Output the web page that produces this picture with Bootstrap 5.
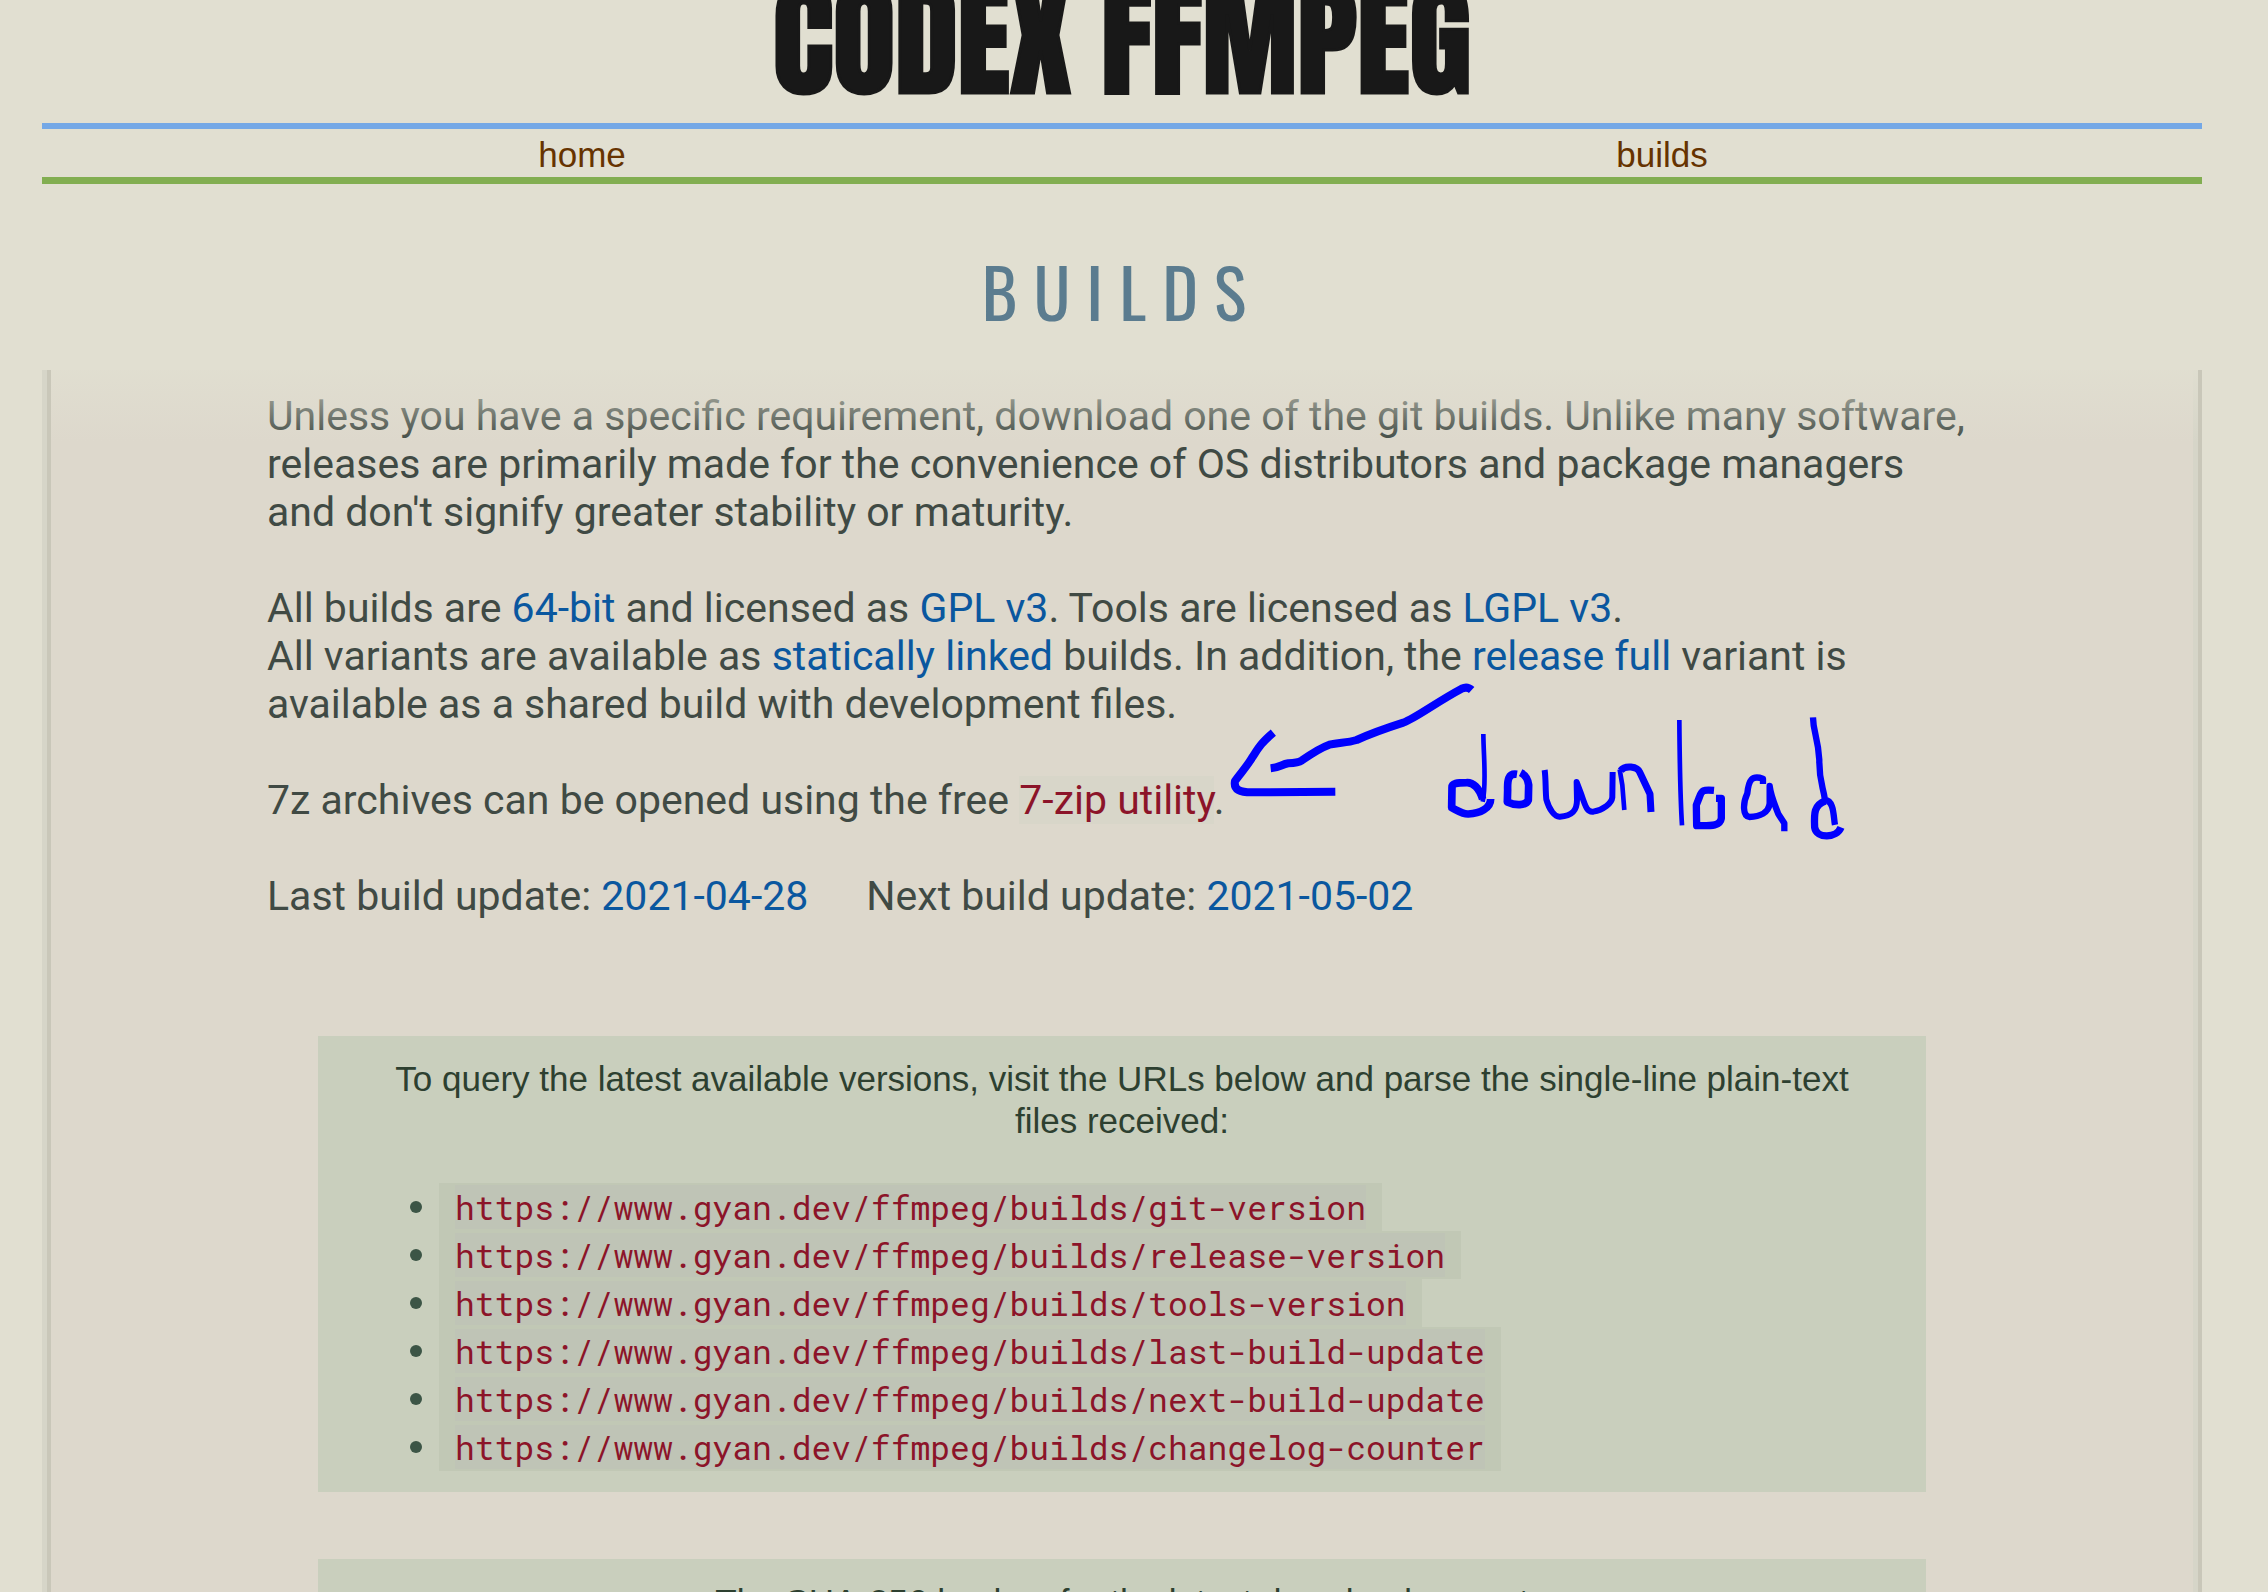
<!DOCTYPE html>
<html lang="en">
<head>
<meta charset="utf-8">
<meta name="viewport" content="width=device-width, initial-scale=1">
<title>Builds - CODEX FFMPEG</title>
<link href="https://cdn.jsdelivr.net/npm/bootstrap@5.3.0/dist/css/bootstrap.min.css" rel="stylesheet">
<style>
  body { background: #e1dfd1; color: #404a44; font-family: Roboto, "Liberation Sans", sans-serif; }
  .page-frame { padding-left: 42px; padding-right: 66px; }
  .site-title { font: 400 127px/80px Impact, Anton, "Roboto Condensed", sans-serif; color: #181818; -webkit-text-stroke: 3px #181818; padding-bottom: 43px; }
  .site-nav { border-top: 6px solid #74a8e6; border-bottom: 7px solid #82ae51; font: 35px/44px "Liberation Sans", Arial, sans-serif; }
  .site-nav a { color: #663300; padding-top: 4px; }
  .page-title { font: 400 68px/100px Oswald, "Roboto Condensed", sans-serif; letter-spacing: 16px; color: #5b7c8f; margin: 57px 0 29px; }
  .sheet { background: #ddd8cc; border-left: 5px solid #d6d5c8; border-right: 4px solid #c9c7b9; box-shadow: inset 4px 0 #c9c7b9, inset -5px 0 #d6d5c8; padding-top: 22px; }
  .sheet::before { content: ""; position: absolute; inset: 0 0 auto 4px; height: 72px; background: linear-gradient(rgba(225,223,209,.85), rgba(225,223,209,0)); z-index: 2; }
  .intro { font-size: 41px; line-height: 48px; padding: 0 221px 0 220px; margin-bottom: 116px; }
  .intro p { margin-bottom: 48px; }
  .intro a { color: #0a579f; }
  .intro .zip-link, .url-list a { color: #8c1429; }
  .intro .zip-link { background: #d8d6c9; }
  .dates { gap: 58px; }
  .info-box { background: #c9cfbd; color: #2d4030; font: 35px/42px "Liberation Sans", Arial, sans-serif; margin: 0 272px 67px 271px; padding: 22px 60px 21px; }
  .url-list { font: 33px/48px "Roboto Mono", "DejaVu Sans Mono", monospace; margin: 41px 0 0 32px; }
  .url-list li::before { content: ""; width: 12px; height: 12px; border-radius: 50%; background: #3c5546; margin-right: 17px; }
  .url-list code { font: inherit; background: #c1c8b5; padding: 0 16px; }
  .url-list a { display: block; line-height: 44px; margin: 2px 0; background: #bfc4b6; }
  .pen-note { left: 1178px; top: 305px; z-index: 3; fill: none; stroke: #0000fe; stroke-linejoin: round; }
</style>
</head>
<body class="vh-100 overflow-hidden">
<div class="page-frame">
  <header>
    <h1 class="site-title text-center mb-0">CODEX FFMPEG</h1>
    <nav class="site-nav row g-0 text-center">
      <a class="col text-decoration-none" href="#home">home</a>
      <a class="col text-decoration-none" href="#builds">builds</a>
    </nav>
  </header>
  <main>
    <h2 class="page-title text-center">BUILDS</h2>
    <div class="sheet position-relative">
      <div class="intro">
        <p>Unless you have a specific requirement, download one of the git builds. Unlike many software, releases are primarily made for the convenience of OS distributors and package managers and don't signify greater stability or maturity.</p>
        <p>All builds are <a class="text-decoration-none" href="#64">64-bit</a> and licensed as <a class="text-decoration-none" href="#gpl">GPL v3</a>. Tools are licensed as <a class="text-decoration-none" href="#lgpl">LGPL v3</a>.<br>
        All variants are available as <a class="text-decoration-none" href="#static">statically linked</a> builds. In addition, the <a class="text-decoration-none" href="#full">release full</a> variant is available as a shared build with development files.</p>
        <p>7z archives can be opened using the free <a class="zip-link text-decoration-none" href="#7zip">7-zip utility</a>.</p>
        <div class="dates d-flex">
          <span>Last build update: <a class="text-decoration-none" href="#last">2021-04-28</a></span>
          <span>Next build update: <a class="text-decoration-none" href="#next">2021-05-02</a></span>
        </div>
      </div>
      <section class="info-box">
        <div class="text-center">To query the latest available versions, visit the URLs below and parse the single-line plain-text files received:</div>
        <ul class="url-list list-unstyled">
          <li class="d-flex align-items-center"><code><a class="text-decoration-none" href="#git-version">https://www.gyan.dev/ffmpeg/builds/git-version</a></code></li>
          <li class="d-flex align-items-center"><code><a class="text-decoration-none" href="#release-version">https://www.gyan.dev/ffmpeg/builds/release-version</a></code></li>
          <li class="d-flex align-items-center"><code><a class="text-decoration-none" href="#tools-version">https://www.gyan.dev/ffmpeg/builds/tools-version</a></code></li>
          <li class="d-flex align-items-center"><code><a class="text-decoration-none" href="#last-build-update">https://www.gyan.dev/ffmpeg/builds/last-build-update</a></code></li>
          <li class="d-flex align-items-center"><code><a class="text-decoration-none" href="#next-build-update">https://www.gyan.dev/ffmpeg/builds/next-build-update</a></code></li>
          <li class="d-flex align-items-center"><code><a class="text-decoration-none" href="#changelog-counter">https://www.gyan.dev/ffmpeg/builds/changelog-counter</a></code></li>
        </ul>
      </section>
      <section class="info-box text-center">The SHA-256 hashes for the latest downloads are at</section>
      <!-- freehand pen marks: an arrow to the 7-zip link and a scribbled word -->
      <svg class="pen-note position-absolute" width="640" height="180" viewBox="1225 675 640 180" role="img" aria-label="download">
        <g transform="translate(1220 670) scale(.3333)" stroke-width="24">
          <path d="M152,295 C180,292 185,283 205,280 C225,279 235,278 246,271 C280,247 300,234 328,224 C360,217 380,219 410,210 C450,192 500,174 550,158 C590,142 650,96 725,56 Q742,48 755,60"/>
          <path d="M160,188 C120,222 115,235 95,265 C80,290 60,312 45,333 C40,360 60,367 95,367 L346,365"/>
        </g>
        <g transform="translate(1440 710) scale(.3333)" stroke-width="18">
          <path stroke-width="14" d="M130,72 C131,150 140,220 128,275"/>
          <path stroke-width="23" d="M128,268 C118,232 98,217 80,218 C50,218 36,220 36,232 L35,293 C55,303 68,313 85,312 C120,310 152,295 152,267"/>
          <path stroke-width="23" d="M231,193 C205,189 202,210 203,240 L202,276 C225,287 258,288 265,270 L266,225 C263,200 250,192 242,188"/>
          <path d="M314,180 C318,210 316,240 319,268 C328,300 345,322 360,320 C398,318 411,300 411,270 L410,216 L425,256 C438,295 443,307 460,305 C490,300 515,280 517,262 L518,186"/>
          <path stroke-width="14" d="M539,178 L547,225 L553,300"/>
          <path stroke-width="21" d="M542,182 C555,165 592,168 600,188 L630,252 L633,306"/>
        </g>
        <g transform="translate(1640 710) scale(.3333)" stroke-width="19">
          <path stroke-width="14" d="M118,30 C119,160 120,250 126,346"/>
          <path stroke-width="22" d="M222,241 C190,238 185,240 178,262 L169,285 L170,347 C210,347 240,350 244,325 L244,265 L228,265"/>
          <path d="M369,222 L369,206 C335,195 326,210 322,250 C308,280 308,318 328,321 C360,320 386,308 389,280 L389,228 C393,260 405,285 415,312 L433,340 L433,364"/>
          <path d="M519,22 C520,70 534,80 538,150 C537,215 550,230 555,270 C583,272 580,320 585,345"/>
          <path stroke-width="22" d="M556,273 C522,285 522,310 524,352 C530,388 590,385 603,352"/>
        </g>
      </svg>
    </div>
  </main>
</div>
<script src="https://cdn.jsdelivr.net/npm/bootstrap@5.3.0/dist/js/bootstrap.bundle.min.js"></script>
</body>
</html>
